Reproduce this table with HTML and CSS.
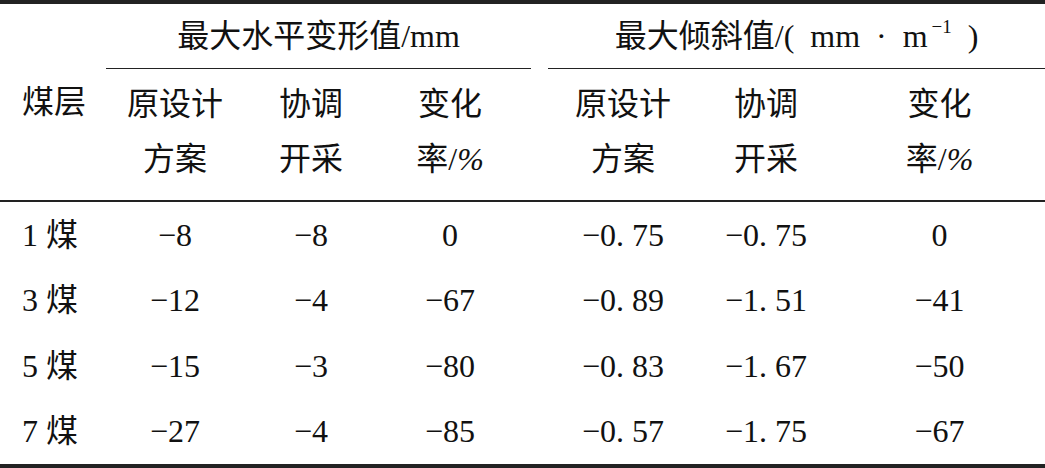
FILE: index.html
```html
<!DOCTYPE html>
<html lang="zh">
<head>
    <meta charset="UTF-8" />
    <meta name="viewport" content="width=device-width, initial-scale=1" />
    <title>煤层开采变形对比</title>
    <link rel="stylesheet" href="styles.css">
</head>
<body>

    <table class="data-table">
        <colgroup>
            <col class="c-seam">
            <col class="c-a1">
            <col class="c-a2">
            <col class="c-a3">
            <col class="c-gap">
            <col class="c-b1">
            <col class="c-b2">
            <col class="c-b3">
        </colgroup>
        <thead>
            <tr class="group-row">
                <th rowspan="2" class="seam-head">煤层</th>
                <th colspan="3" class="group">最大水平变形值/mm</th>
                <th class="gap"></th>
                <th colspan="3" class="group">最大倾斜值/(&ensp;mm&ensp;·&ensp;m<sup>&thinsp;−1</sup>&ensp;)</th>
            </tr>
            <tr class="sub-row">
                <th>原设计<br>方案</th>
                <th>协调<br>开采</th>
                <th class="rate">变化<br>率/<i>%</i></th>
                <th class="gap"></th>
                <th>原设计<br>方案</th>
                <th>协调<br>开采</th>
                <th>变化<br>率/<i>%</i></th>
            </tr>
        </thead>
        <tbody>
            <tr>
                <td class="seam">1 煤</td>
                <td>−8</td>
                <td>−8</td>
                <td class="rate">0</td>
                <td class="gap"></td>
                <td>−0. 75</td>
                <td>−0. 75</td>
                <td>0</td>
            </tr>
            <tr>
                <td class="seam">3 煤</td>
                <td>−12</td>
                <td>−4</td>
                <td class="rate">−67</td>
                <td class="gap"></td>
                <td>−0. 89</td>
                <td>−1. 51</td>
                <td>−41</td>
            </tr>
            <tr>
                <td class="seam">5 煤</td>
                <td>−15</td>
                <td>−3</td>
                <td class="rate">−80</td>
                <td class="gap"></td>
                <td>−0. 83</td>
                <td>−1. 67</td>
                <td>−50</td>
            </tr>
            <tr>
                <td class="seam">7 煤</td>
                <td>−27</td>
                <td>−4</td>
                <td class="rate">−85</td>
                <td class="gap"></td>
                <td>−0. 57</td>
                <td>−1. 75</td>
                <td>−67</td>
            </tr>
        </tbody>
    </table>

</body>
</html>
```

FILE: styles.css
```css
body {
    margin: 0;
    background: #fff;
    color: #111;
    font-family: "Liberation Serif", "Noto Sans CJK SC", serif;
}
.data-table {
    width: 1045px;
    table-layout: fixed;
    border-collapse: separate;
    border-spacing: 0;
    border-top: 4px solid #222;
    border-bottom: 4px solid #222;
    font-size: 32px;
}
.c-seam { width: 106px; }
.c-a1 { width: 138px; }
.c-a2 { width: 134px; }
.c-a3 { width: 153px; }
.c-gap { width: 17px; }
.c-b1 { width: 150px; }
.c-b2 { width: 136px; }
.c-b3 { width: 211px; }

th, td {
    padding: 0;
    text-align: center;
    font-weight: normal;
    box-sizing: border-box;
}
/* 表头第一行：分组标题带细线 */
.group-row th {
    height: 65px;
    line-height: 40px;
}
.group-row .group {
    border-bottom: 1px solid #222;
}
.seam-head {
    text-align: left;
    padding-left: 22px;
    vertical-align: middle;
    border-bottom: 2px solid #222;
}
.sub-row th {
    height: 133px;
    line-height: 55px;
    vertical-align: top;
    padding-top: 8px;
    border-bottom: 2px solid #222;
}
.sub-row th i {
    font-style: italic;
}
.group sup {
    font-size: 19px;
    line-height: 0;
    vertical-align: 14px;
}
.rate {
    padding-right: 9px;
}
tbody td {
    height: 65.5px;
    line-height: 40px;
}
.seam {
    text-align: left;
    padding-left: 22px;
}
```
